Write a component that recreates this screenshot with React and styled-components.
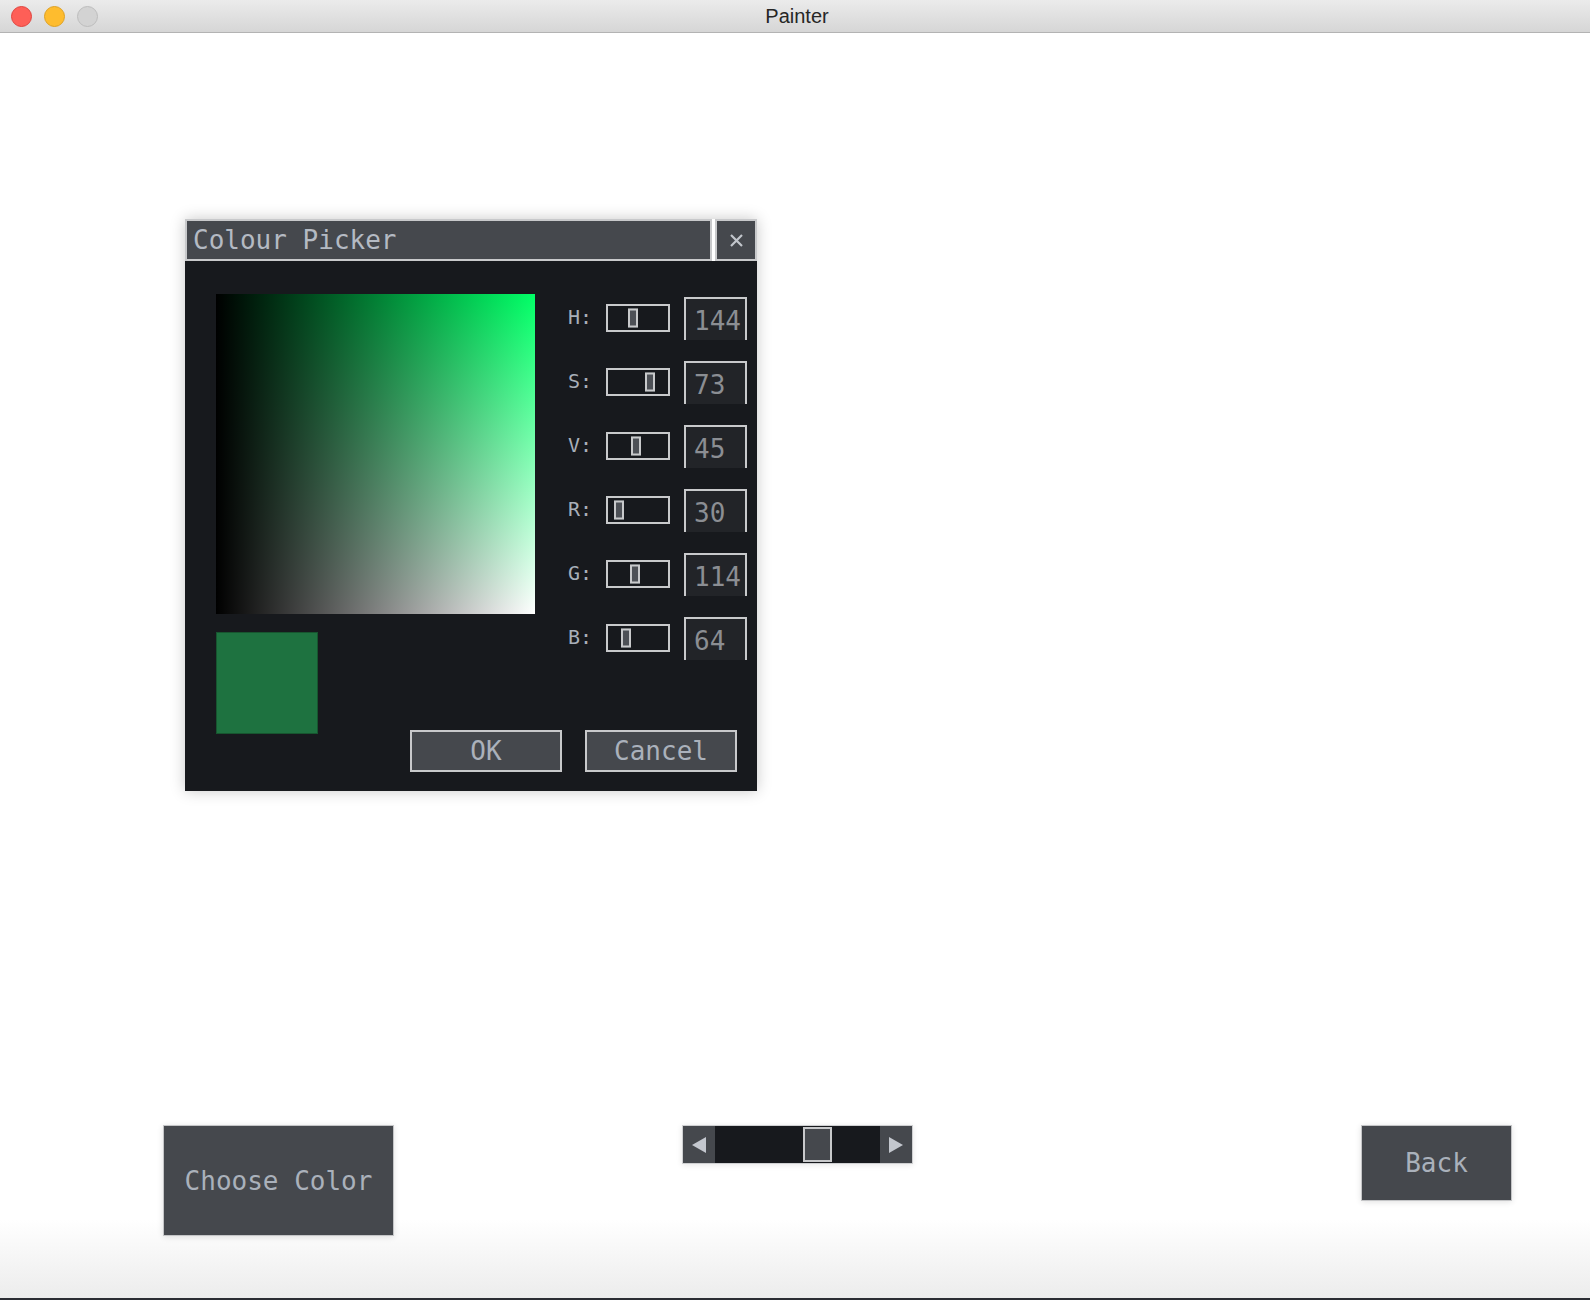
import React from 'react';
import styled, { createGlobalStyle } from 'styled-components';

const GlobalStyle = createGlobalStyle`
  body {
    margin: 0;
    overflow: hidden;
    background: #ffffff;
  }
`;

const MONO = `"DejaVu Sans Mono", "Liberation Mono", monospace`;
const PANEL = '#45484d';
const DARK = '#17191d';
const EDGE = '#c8c9cb';
const TEXT = '#aab1bb';

const Window = styled.div`
  width: 1590px;
  height: 1300px;
  display: flex;
  flex-direction: column;
  font-family: ${MONO};
`;

const TitleBar = styled.div`
  height: 32px;
  display: grid;
  grid-template-columns: 1fr auto 1fr;
  align-items: center;
  background: linear-gradient(to bottom, #ebebeb, #d6d6d6);
  border-bottom: 1px solid #b3b3b3;
  padding: 0 11px;
`;

const Lights = styled.div`
  display: flex;
  gap: 12px;
  padding-top: 1px;
`;

const Light = styled.span`
  width: 19px;
  height: 19px;
  border-radius: 50%;
  background: ${(p) => p.$fill};
  border: 1px solid ${(p) => p.$rim};
`;

const WindowTitle = styled.div`
  font-family: "Liberation Sans", Arial, sans-serif;
  font-size: 20px;
  color: #262626;
  padding: 1px 0 0 4px;
`;

const Content = styled.div`
  flex: 1;
  display: flex;
  flex-direction: column;
  background: linear-gradient(to bottom, #ffffff 0, #ffffff calc(100% - 80px), #ececec calc(100% - 2px), #2b2d33 calc(100% - 2px));
`;

const Dialog = styled.div`
  width: 572px;
  margin: 186px 0 0 185px;
  display: flex;
  flex-direction: column;
  box-shadow: 0 0 14px rgba(0, 0, 0, 0.22);
`;

const DialogHeader = styled.div`
  display: flex;
  gap: 3px;
  height: 42px;
`;

const HeaderTitle = styled.div`
  flex: 1;
  display: flex;
  align-items: center;
  padding: 0 6px;
  background: ${PANEL};
  border: 2px solid ${EDGE};
  font-size: 26px;
  color: #b4bac3;
`;

const CloseButton = styled.div`
  width: 42px;
  box-sizing: border-box;
  display: flex;
  align-items: center;
  justify-content: center;
  background: ${PANEL};
  border: 2px solid ${EDGE};
`;

const DialogBody = styled.div`
  background: ${DARK};
  padding: 33px 9px 19px 31px;
  display: flex;
  flex-direction: column;
`;

const MainRow = styled.div`
  display: flex;
  align-items: flex-start;
  gap: 33px;
`;

const LeftColumn = styled.div`
  display: flex;
  flex-direction: column;
  gap: 18px;
`;

const SVSquare = styled.div`
  width: 319px;
  height: 320px;
  background:
    linear-gradient(to right, #000000, rgba(0, 0, 0, 0)),
    linear-gradient(to bottom, ${(p) => p.$hue}, #ffffff);
`;

const Swatch = styled.div`
  width: 102px;
  height: 102px;
  box-sizing: border-box;
  background: ${(p) => p.$color};
  border: 1px solid #17552f;
`;

const Controls = styled.div`
  margin-top: 3px;
  display: flex;
  flex-direction: column;
  gap: 21px;
`;

const ControlRow = styled.div`
  display: flex;
  align-items: center;
  height: 43px;
`;

const ControlLabel = styled.span`
  width: 25px;
  margin-right: 13px;
  padding-bottom: 4px;
  font-size: 20px;
  color: #a8afb9;
`;

const Slider = styled.div`
  position: relative;
  width: 64px;
  height: 28px;
  margin-bottom: 2px;
  box-sizing: border-box;
  border: 2px solid ${EDGE};
  background: ${DARK};
`;

const Thumb = styled.div`
  position: absolute;
  top: 50%;
  transform: translateY(-50%);
  width: 10px;
  height: 19px;
  box-sizing: border-box;
  background: #4d5056;
  border: 2px solid ${EDGE};
`;

const ValueBox = styled.div`
  margin-left: 14px;
  width: 63px;
  height: 43px;
  box-sizing: border-box;
  display: flex;
  align-items: center;
  padding: 3px 0 0 8px;
  background: #222428;
  border: 2px solid ${EDGE};
  border-bottom: none;
  font-size: 26px;
  color: #8b8e93;
`;

const ButtonRow = styled.div`
  margin-top: -4px;
  padding-right: 11px;
  display: flex;
  justify-content: flex-end;
  gap: 23px;
`;

const DialogButton = styled.div`
  width: 152px;
  height: 42px;
  box-sizing: border-box;
  display: flex;
  align-items: center;
  justify-content: center;
  background: ${PANEL};
  border: 2px solid ${EDGE};
  font-size: 26px;
  color: ${TEXT};
`;

const BottomRow = styled.div`
  margin-top: 334px;
  padding-left: 163px;
  display: flex;
  align-items: flex-start;
`;

const PageButton = styled.div`
  width: ${(p) => p.$w}px;
  height: ${(p) => p.$h}px;
  margin-left: ${(p) => p.$offset || 0}px;
  box-sizing: border-box;
  display: flex;
  align-items: center;
  justify-content: center;
  background: ${PANEL};
  border: 1px solid #c4c5c7;
  box-shadow: 0 1px 6px rgba(0, 0, 0, 0.12);
  font-size: 26px;
  color: ${TEXT};
`;

const ScrollBar = styled.div`
  width: 231px;
  height: 39px;
  margin-left: 288px;
  box-sizing: border-box;
  display: flex;
  border: 1px solid #cfd0d2;
  box-shadow: 0 1px 6px rgba(0, 0, 0, 0.1);
`;

const ArrowButton = styled.div`
  width: 32px;
  display: flex;
  align-items: center;
  justify-content: center;
  background: ${PANEL};
`;

const Track = styled.div`
  flex: 1;
  display: flex;
  align-items: center;
  background: ${DARK};
`;

const TrackThumb = styled.div`
  width: 29px;
  height: 35px;
  box-sizing: border-box;
  background: ${PANEL};
  border: 2px solid ${EDGE};
`;

const channels = [
  { key: 'H', value: 144, max: 360 },
  { key: 'S', value: 73, max: 100 },
  { key: 'V', value: 45, max: 100 },
  { key: 'R', value: 30, max: 255 },
  { key: 'G', value: 114, max: 255 },
  { key: 'B', value: 64, max: 255 },
];

function Arrow({ dir }) {
  const pts = dir === 'left' ? '14,0 14,16 0,8' : '0,0 0,16 14,8';
  return (
    <svg width="14" height="16" viewBox="0 0 14 16">
      <polygon points={pts} fill="#c3c7ce" />
    </svg>
  );
}

export default function App() {
  const scrollPos = 0.64;
  return (
    <>
      <GlobalStyle />
      <Window>
        <TitleBar>
          <Lights>
            <Light $fill="#fe5f57" $rim="#e0443e" />
            <Light $fill="#febc2e" $rim="#dea123" />
            <Light $fill="#d3d3d3" $rim="#bdbdbd" />
          </Lights>
          <WindowTitle>Painter</WindowTitle>
          <div />
        </TitleBar>
        <Content>
          <Dialog>
            <DialogHeader>
              <HeaderTitle>Colour Picker</HeaderTitle>
              <CloseButton>
                <svg width="13" height="13" viewBox="0 0 13 13">
                  <path d="M1 1 L12 12 M12 1 L1 12" stroke="#c2c6cc" strokeWidth="2.2" />
                </svg>
              </CloseButton>
            </DialogHeader>
            <DialogBody>
              <MainRow>
                <LeftColumn>
                  <SVSquare $hue="#00ff66" />
                  <Swatch $color="#1e7240" />
                </LeftColumn>
                <Controls>
                  {channels.map((c) => (
                    <ControlRow key={c.key}>
                      <ControlLabel>{c.key}:</ControlLabel>
                      <Slider>
                        <Thumb style={{ left: Math.round((c.value / c.max) * 50) }} />
                      </Slider>
                      <ValueBox>{c.value}</ValueBox>
                    </ControlRow>
                  ))}
                </Controls>
              </MainRow>
              <ButtonRow>
                <DialogButton>OK</DialogButton>
                <DialogButton>Cancel</DialogButton>
              </ButtonRow>
            </DialogBody>
          </Dialog>
          <BottomRow>
            <PageButton $w={231} $h={111}>Choose Color</PageButton>
            <ScrollBar>
              <ArrowButton>
                <Arrow dir="left" />
              </ArrowButton>
              <Track>
                <TrackThumb style={{ marginLeft: Math.round(scrollPos * 137) }} />
              </Track>
              <ArrowButton>
                <Arrow dir="right" />
              </ArrowButton>
            </ScrollBar>
            <PageButton $w={151} $h={76} $offset={448}>Back</PageButton>
          </BottomRow>
        </Content>
      </Window>
    </>
  );
}
